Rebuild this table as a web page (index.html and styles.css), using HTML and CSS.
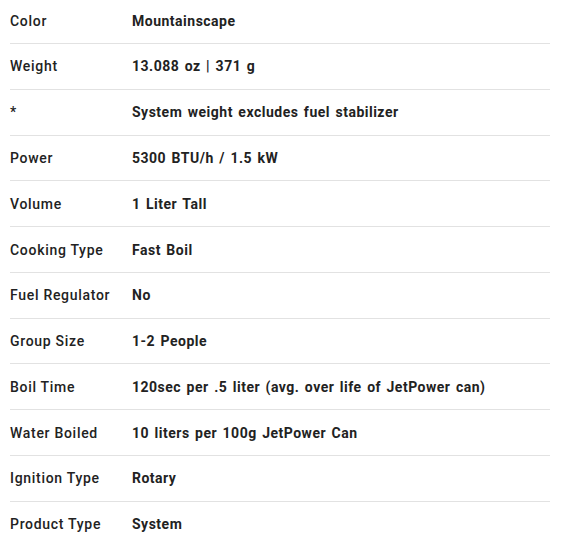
FILE: index.html
```html
<!DOCTYPE html>
<html lang="en">
<head>
<meta charset="utf-8">
<title>Specs</title>
<link rel="stylesheet" href="styles.css">
</head>
<body>
<div class="specs">
  <div class="row first"><div class="label">Color</div><div class="value">Mountainscape</div></div>
  <div class="row"><div class="label">Weight</div><div class="value">13.088 oz | 371 g</div></div>
  <div class="row"><div class="label">*</div><div class="value">System weight excludes fuel stabilizer</div></div>
  <div class="row"><div class="label">Power</div><div class="value">5300 BTU/h / 1.5 kW</div></div>
  <div class="row"><div class="label">Volume</div><div class="value">1 Liter Tall</div></div>
  <div class="row"><div class="label">Cooking Type</div><div class="value">Fast Boil</div></div>
  <div class="row"><div class="label">Fuel Regulator</div><div class="value">No</div></div>
  <div class="row"><div class="label">Group Size</div><div class="value">1-2 People</div></div>
  <div class="row"><div class="label">Boil Time</div><div class="value">120sec per .5 liter (avg. over life of JetPower can)</div></div>
  <div class="row"><div class="label">Water Boiled</div><div class="value">10 liters per 100g JetPower Can</div></div>
  <div class="row"><div class="label">Ignition Type</div><div class="value">Rotary</div></div>
  <div class="row"><div class="label">Product Type</div><div class="value">System</div></div>
</div>
</body>
</html>
```
FILE: styles.css
```css
html, body {
  margin: 0;
  padding: 0;
  background: #ffffff;
}
body {
  font-family: Roboto, "Liberation Sans", sans-serif;
  font-size: 14px;
  color: #222222;
}
.specs {
  width: 540px;
  margin-left: 10px;
}
.row {
  display: flex;
  line-height: 20px;
  padding: 12.4px 0;
  border-bottom: 1px solid #e2e2e2;
}
.row.first {
  padding-top: 11px;
  padding-bottom: 12px;
}
.label {
  width: 122px;
  flex: none;
  font-weight: 500;
  letter-spacing: 0.7px;
  white-space: nowrap;
}
.value {
  font-weight: 700;
  letter-spacing: 0.5px;
  word-spacing: 1.5px;
  white-space: nowrap;
}
```
